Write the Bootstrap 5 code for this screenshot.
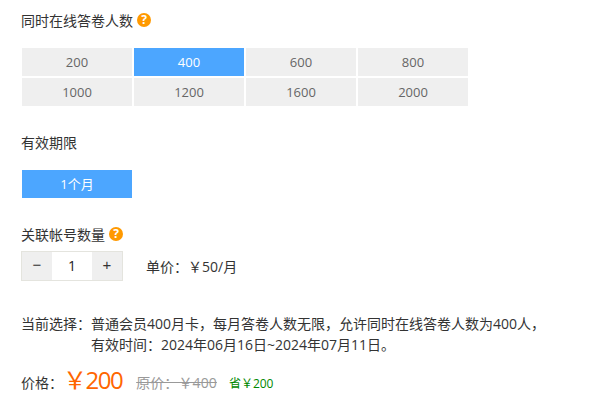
<!DOCTYPE html>
<html lang="zh-CN">
<head>
<meta charset="utf-8">
<title>购买</title>
<link rel="stylesheet" href="https://cdn.jsdelivr.net/npm/bootstrap@5.3.0/dist/css/bootstrap.min.css">
<style>
html,body{margin:0;height:400px;overflow:hidden}
body{font-family:"Open Sans","Noto Sans CJK SC",sans-serif;font-size:14px;line-height:20px;color:#333;background:#fff;padding:11px 0 0 22px}
.lbl{height:20px;margin-left:-1px}
.help{width:14px;height:14px;border-radius:50%;background:#f90;color:#fff;font-size:12px;line-height:14px;font-weight:700;text-align:center;margin-left:4px;margin-top:-2px}
.opt-grid{display:grid;grid-template-columns:repeat(4,110px);grid-auto-rows:28px;gap:2px;margin-top:17px}
.opt{background:#efefef;color:#666;font-size:13px;line-height:28px;text-align:center}
.opt.on{background:#4ca6ff;color:#fff}
.sec-2{margin-top:27px}
.opt-grid.tight{margin-top:17px}
.sec-3{margin-top:27px}
.stepper{width:102px;height:30px;border:1px solid #e4e4de;margin-left:-1px}
.st-btn{width:30px;background:#efefef;text-align:center;line-height:26px;font-size:15px;font-family:"Liberation Sans",sans-serif;color:#333}
.st-val{flex:1;text-align:center;line-height:28px;color:#222;font-size:14px}
.unit{margin-left:23px;margin-top:1px}
.stepline{margin-top:6px}
.pick{margin-top:32px;margin-left:-1px;line-height:21px}
.pick-h{width:70px;flex:none}
.pick-b{width:460px;flex:none}
.price{margin-top:12px;margin-left:-1px;height:32px}
.big{color:#f60;font-size:24px;line-height:32px;letter-spacing:-1.5px;margin-top:-6px}
.orig{color:#999;text-decoration:line-through;margin-left:14px;letter-spacing:.1px}
.save{color:#080;font-size:12px;margin-left:12px;margin-top:1px}
</style>
</head>
<body>
<div class="d-flex align-items-center lbl"><span>同时在线答卷人数</span><span class="help">?</span></div>
<div class="opt-grid">
  <div class="opt">200</div><div class="opt on">400</div><div class="opt">600</div><div class="opt">800</div>
  <div class="opt">1000</div><div class="opt">1200</div><div class="opt">1600</div><div class="opt">2000</div>
</div>
<div class="lbl sec-2">有效期限</div>
<div class="opt-grid tight"><div class="opt on">1个月</div></div>
<div class="d-flex align-items-center lbl sec-3"><span>关联帐号数量</span><span class="help">?</span></div>
<div class="d-flex align-items-center stepline">
  <div class="stepper d-flex"><div class="st-btn">−</div><div class="st-val">1</div><div class="st-btn">+</div></div>
  <div class="unit">单价：￥50/月</div>
</div>
<div class="pick d-flex">
  <div class="pick-h">当前选择：</div>
  <div class="pick-b"><div>普通会员400月卡，每月答卷人数无限，允许同时在线答卷人数为400人，</div><div>有效时间：2024年06月16日~2024年07月11日。</div></div>
</div>
<div class="price d-flex align-items-center">
  <span>价格：</span><span class="big">￥200</span><span class="orig">原价：￥400</span><span class="save">省￥200</span>
</div>
<script src="https://cdn.jsdelivr.net/npm/bootstrap@5.3.0/dist/js/bootstrap.bundle.min.js"></script>
</body>
</html>
